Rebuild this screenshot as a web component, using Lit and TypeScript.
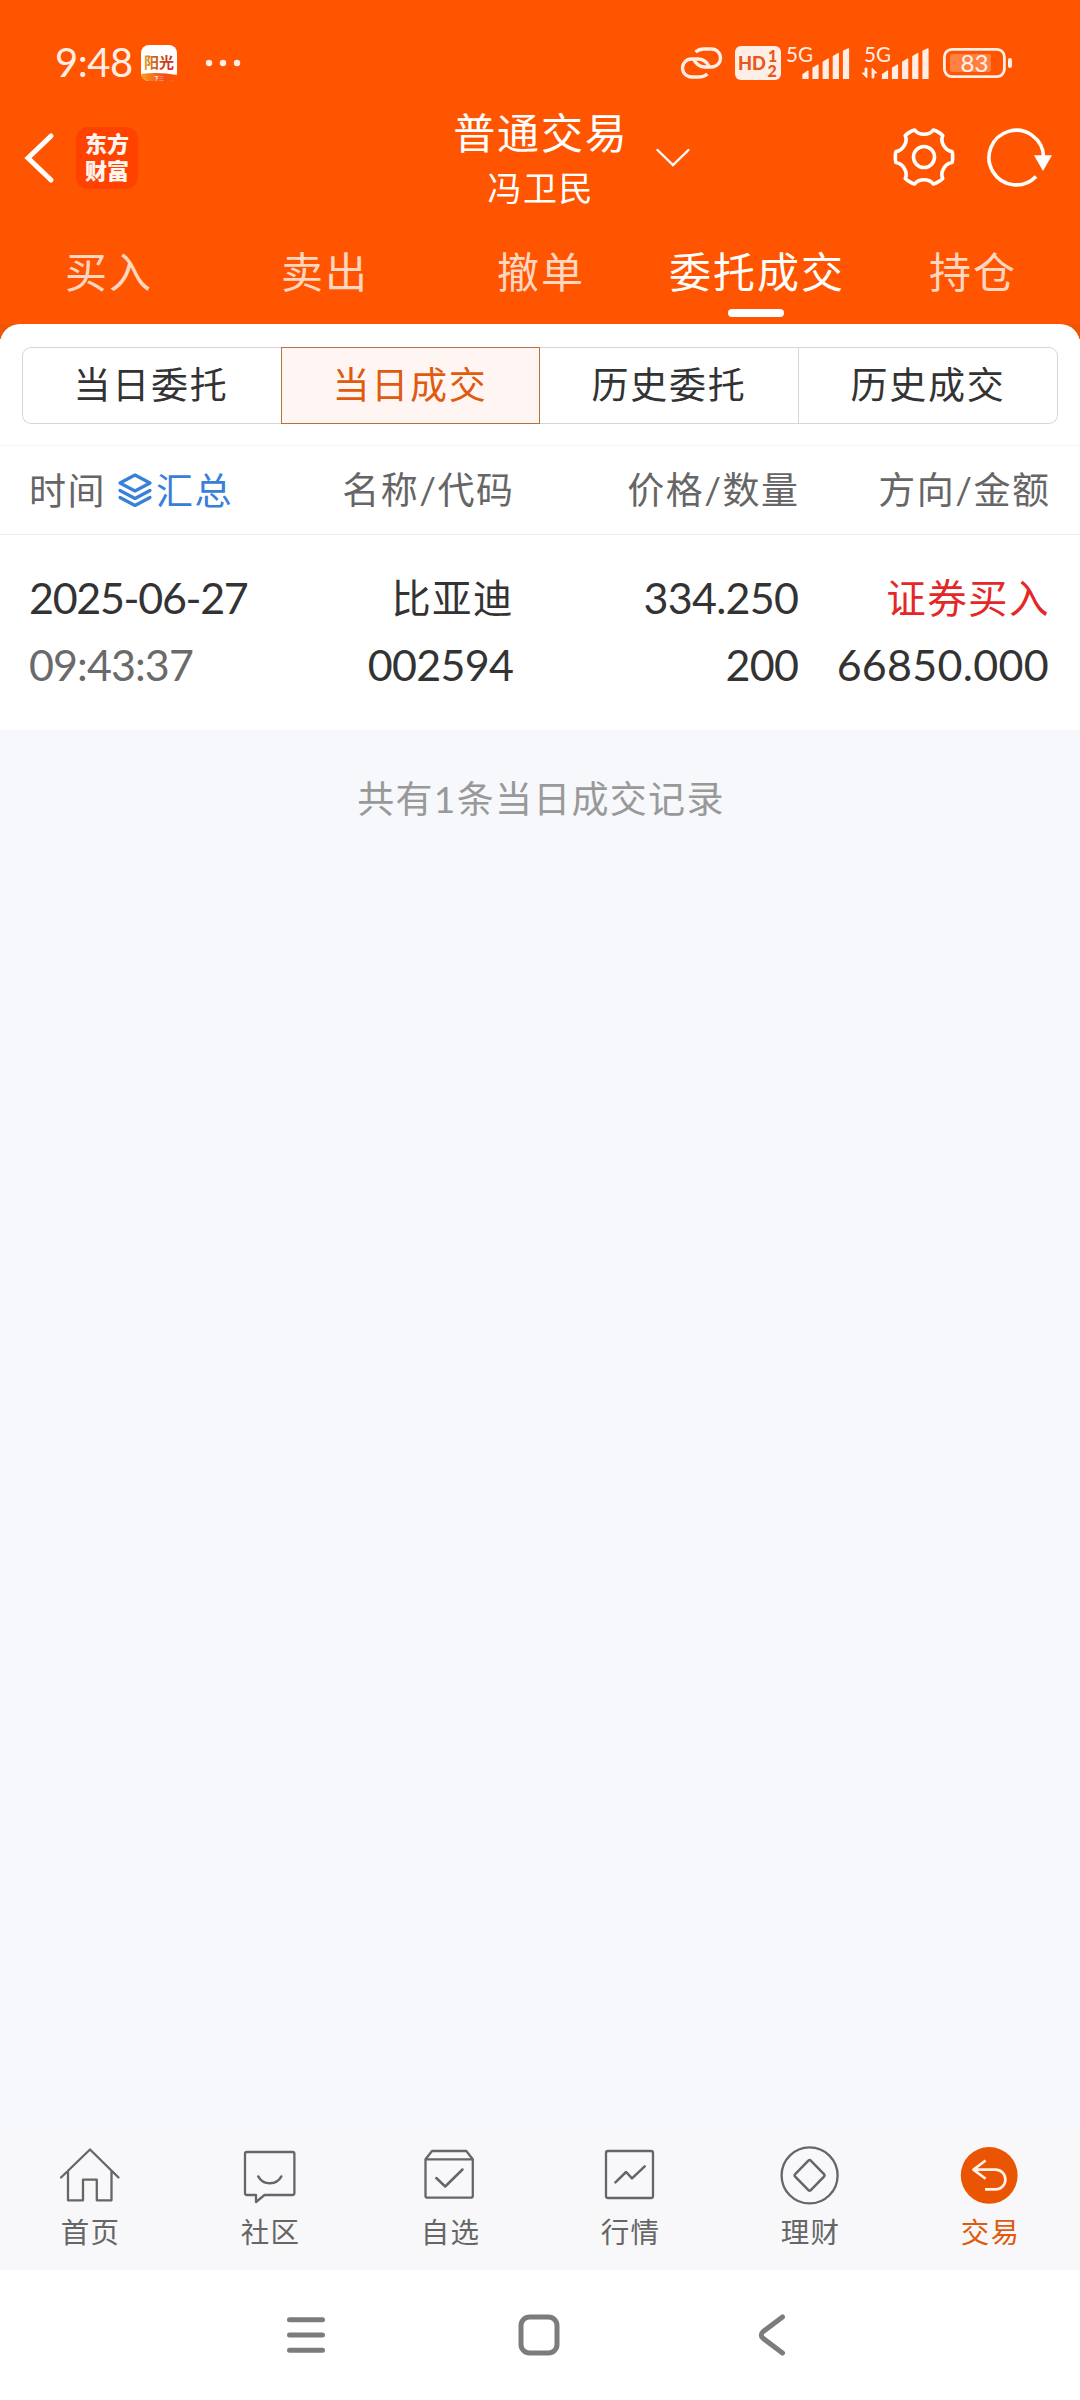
import { LitElement, html, svg, css } from "lit";
import { customElement } from "lit/decorators.js";
import { classMap } from "lit/directives/class-map.js";

/** Six-toothed gear outline around the origin. */
function gearPath(): string {
  const at = (r: number, deg: number) => {
    const a = (deg * Math.PI) / 180;
    return `${(r * Math.cos(a)).toFixed(2)} ${(r * Math.sin(a)).toFixed(2)}`;
  };
  let d = `M${at(28.6, -11)}`;
  for (let k = 0; k < 6; k++) {
    const a = k * 60;
    d += `Q${at(29, a - 5)} ${at(28.6, a)}Q${at(29, a + 5)} ${at(28.6, a + 11)}`;
    d += `C${at(22, a + 16)} ${at(22, a + 44)} ${at(28.6, a + 49)}`;
  }
  return d + "Z";
}

const bars = svg`
  <path d="M1 30.500V26.500L6 23V30.500ZM11 30.500V20L16 17V30.500ZM21.200 30.500V14L26.200 11V30.500ZM31.300 30.500V8.500L36.300 5.500V30.500ZM41.500 30.500V3L46.500 0.800V30.500Z"
    fill="#ffeee6" stroke="#ffeee6" stroke-width="1.200" stroke-linejoin="round"/>`;

const tabIcons = {
  home: svg`<path d="M3 32.500 32 4.500 60.500 32.500M10 26V55.300H25V34.700H38.800V55.300H53.500V26"/>`,
  chat: svg`<path d="M9 7H54.400Q56.400 7 56.400 9V48Q56.400 50 54.400 50H26.500L18 57V50H9Q7 50 7 48V9Q7 7 9 7Z"/><path d="M20.300 31.500Q24 38.300 31.800 38.300T43.300 31.500" stroke-width="2.600"/>`,
  box: svg`<path d="M7.500 14.300 14 6H48.300L54.800 14.300V50.700Q54.800 52.700 52.800 52.700H9.500Q7.500 52.700 7.500 50.700ZM7.500 14.300H54.800"/><path d="M18.300 33 27.200 41.500 44.500 24.500" stroke-width="2.500"/>`,
  chart: svg`<rect x="8" y="6" width="47" height="47" rx="2"/><path d="M17.400 37.300 28.100 27 34 33.300 46.700 21.300" stroke-width="2.500"/>`,
  coin: svg`<circle cx="31.600" cy="30.400" r="28"/><path d="M30.400 15.600Q31.600 14.400 32.800 15.600L46 29.200Q47.200 30.400 46 31.600L32.800 45.200Q31.600 46.400 30.400 45.200L17.200 31.600Q16 30.400 17.200 29.200Z" stroke-width="2.500"/>`,
  trade: svg`<circle cx="31.200" cy="30.400" r="28.400" fill="#ea5504" stroke="none"/><path d="M27.600 15.500 15.400 24.600 27.600 33.700M15.400 24.600H37.500A9.900 9.900 0 0 1 37.500 44.400H27" stroke="#fff1e8" stroke-width="2.600" stroke-linecap="butt"/>`,
};

const topTabs = ["买入", "卖出", "撤单", "委托成交", "持仓"];
const segments = ["当日委托", "当日成交", "历史委托", "历史成交"];
const navTabs: { label: string; icon: keyof typeof tabIcons }[] = [
  { label: "首页", icon: "home" },
  { label: "社区", icon: "chat" },
  { label: "自选", icon: "box" },
  { label: "行情", icon: "chart" },
  { label: "理财", icon: "coin" },
  { label: "交易", icon: "trade" },
];
const records = [
  {
    date: "2025-06-27",
    time: "09:43:37",
    name: "比亚迪",
    code: "002594",
    price: "334.250",
    count: "200",
    side: "证券买入",
    amount: "66850.000",
  },
];

@customElement("status-bar")
class StatusBar extends LitElement {
  static styles = css`
    :host {
      display: flex;
      align-items: center;
      height: 82px;
      padding: 22px 68px 0 55px;
      color: #ffeee6;
    }
    svg { display: block; flex: none; overflow: visible; }
    .clock { font-size: 40px; line-height: 80px; letter-spacing: -0.5px; width: 86px; margin-top: -2px; white-space: nowrap; }
    .dots { margin-left: 28px; }
    .right { display: flex; align-items: center; margin-left: auto; }
    .hd { margin-left: 12px; }
    .sig1 { margin-left: 6px; }
    .sig2 { margin-left: 12px; }
    .battery { margin-left: 14px; }
    text { font-family: Lato, "Noto Sans CJK SC", sans-serif; }
    .cjk { font-family: "Noto Sans CJK SC", sans-serif; }
  `;
  render() {
    return html`
      <span class="clock">9:48</span>
      <svg width="36" height="36" viewBox="0 0 36 36">
        <defs>
          <linearGradient id="g" x1="0" x2="1"><stop offset="0" stop-color="#e09a20" /><stop offset="0.5" stop-color="#c8501c" /><stop offset="1" stop-color="#c82a18" /></linearGradient>
          <linearGradient id="h" x1="0" x2="1"><stop offset="0" stop-color="#f7a020" /><stop offset="0.6" stop-color="#f2501c" /><stop offset="1" stop-color="#ff5200" /></linearGradient>
        </defs>
        <rect width="36" height="36" rx="8" fill="#fff" />
        <path d="M0 29Q18 26.500 36 30Q35 36 28 36H8Q1 36 0 29Z" fill="url(#h)" />
        <text class="cjk" x="3" y="22.500" font-size="15" font-weight="700" fill="url(#g)">阳光</text>
        <text class="cjk" x="13" y="34.500" font-size="5" fill="#fff">下三</text>
      </svg>
      <svg class="dots" width="36" height="8" viewBox="0 0 36 8" fill="#ffeee6">
        <circle cx="4" cy="4" r="3.200" /><circle cx="18" cy="4" r="3.200" /><circle cx="32" cy="4" r="3.200" />
      </svg>
      <div class="right">
        <svg width="43" height="32" viewBox="0 0 43 32" fill="none" stroke="#ffeee6" stroke-width="3.300">
          <path d="M15.500 5Q19 2 24 2H31.500A9 9 0 0 1 31.500 20H24.500Q17 19.500 13.500 12" />
          <path d="M27.500 27Q24 30 19 30H11.500A9 9 0 0 1 11.500 12H18.500Q26 12.500 29.500 20" />
        </svg>
        <svg class="hd" width="46" height="34" viewBox="0 0 46 34">
          <rect width="46" height="34" rx="6" fill="#ffeee6" />
          <g fill="#e8561a" font-weight="900">
            <text x="3" y="24" font-size="19.500" textLength="28" lengthAdjust="spacingAndGlyphs">HD</text>
            <text x="33" y="15.500" font-size="16">1</text>
            <text x="32.500" y="30.500" font-size="16">2</text>
          </g>
        </svg>
        <svg class="sig1" width="63" height="34" viewBox="0 0 63 34">
          <text x="-1" y="15.500" font-size="21" textLength="27" lengthAdjust="spacingAndGlyphs" fill="#ffeee6">5G</text>
          <g transform="translate(15 2)">${bars}</g>
        </svg>
        <svg class="sig2" width="67" height="34" viewBox="0 0 67 34">
          <text x="2" y="15.500" font-size="21" textLength="27" lengthAdjust="spacingAndGlyphs" fill="#ffeee6">5G</text>
          <path d="M5 22V32L0 27H3V22ZM10 32V22L15 27H12V32Z" fill="#ffeee6" stroke="#ffeee6" stroke-width="0.800" />
          <g transform="translate(19.500 2)">${bars}</g>
        </svg>
        <svg class="battery" width="69" height="30" viewBox="0 0 69 30">
          <rect x="1.400" y="1.400" width="60" height="27.200" rx="7.500" fill="none" stroke="#ffeee6" stroke-width="2.800" />
          <rect x="7" y="6" width="41" height="18" rx="2" fill="#ff8040" />
          <rect x="65" y="10" width="4" height="10" rx="2" fill="#ffeee6" />
          <text x="17.500" y="23.500" font-size="24" textLength="28" lengthAdjust="spacingAndGlyphs" fill="#fff3ec">83</text>
        </svg>
      </div>
    `;
  }
}

@customElement("app-root")
class AppRoot extends LitElement {
  static styles = css`
    :host {
      display: flex;
      flex-direction: column;
      width: 1080px;
      height: 2400px;
      overflow: hidden;
      background: #f7f8fb;
      color: #333;
      font-family: Lato, "Noto Sans CJK SC", sans-serif;
    }
    svg { display: block; flex: none; overflow: visible; }
    .top { background: #ff5500; color: #fff; }
    .titlebar { display: grid; grid-template-columns: 1fr auto 1fr; height: 108px; align-items: center; }
    .lead { display: flex; align-items: center; padding-left: 24px; gap: 20px; }
    .logo {
      width: 62px; height: 62px; border-radius: 12px; background: #ff4200; box-sizing: border-box;
      display: flex; flex-direction: column; align-items: center; justify-content: center; padding-bottom: 2px;
      font: 900 22px/27px Lato, "Noto Sans CJK SC", sans-serif; color: #fff4ee;
    }
    .titles { display: flex; flex-direction: column; align-items: center; }
    .title { font-size: 42px; line-height: 59px; letter-spacing: 1.900px; margin-right: -1.900px; }
    .sub { font-size: 34px; line-height: 49px; letter-spacing: 1.600px; margin-right: -1.600px; }
    .trail { display: flex; align-items: center; padding: 0 28px 0 29px; }
    .gear { margin-left: auto; margin-right: 32px; }
    .tabs { display: grid; grid-template-columns: repeat(5, 1fr); height: 112px; }
    .tab {
      display: flex; flex-direction: column; align-items: center; padding-top: 23px;
      font-size: 42px; line-height: 74px; letter-spacing: 2px; color: #ffd6c0; white-space: nowrap;
    }
    .tab span { margin-right: -2px; }
    .tab.on { color: #fff; }
    .tab.on::after { content: ""; width: 56px; height: 8px; border-radius: 4px; background: #fff; }
    .panel-back { background: linear-gradient(#ee5500 15px, #fff 15px); }
    .panel { background: #fff; border-radius: 20px 20px 0 0; padding: 23px 22px 21px 22px; }
    .segs { display: grid; grid-template-columns: repeat(4, 1fr); height: 77px; }
    .seg {
      box-sizing: border-box; border: 1px solid #d5d8da; border-left: none; text-align: center;
      font-size: 37px; line-height: 74px; letter-spacing: 1.700px; color: #333;
    }
    .seg:first-child { border-left: 1px solid #d5d8da; border-right: none; border-radius: 9px 0 0 9px; padding-right: 2px; }
    .seg:last-child { border-radius: 0 9px 9px 0; }
    .seg.on { border: 1px solid #b5723f; background: #fff6f3; color: #e05a10; padding-right: 1px; }
    .cols { display: grid; grid-template-columns: 262px 222px 285px 251px; padding: 0 31px 0 29px; background: #fff; box-sizing: border-box; }
    .cols > * { text-align: right; white-space: nowrap; }
    .head {
      height: 90px; border-top: 1px solid #f5f6f6; border-bottom: 1px solid #ececec;
      font-size: 37px; line-height: 87px; letter-spacing: 1.500px; color: #666;
    }
    .head > * { margin-right: -1.500px; }
    .head .first { display: flex; align-items: center; }
    .sum { display: flex; align-items: center; gap: 4px; margin-left: 12px; color: #3880d8; }
    .row { padding-top: 29px; font-size: 43px; line-height: 67px; height: 195px; }
    .cell { display: flex; flex-direction: column; align-items: flex-end; }
    .cell.first { align-items: flex-start; }
    .num { letter-spacing: -0.700px; margin-right: -0.300px; }
    .first .num { letter-spacing: -1.300px; }
    .first .time { letter-spacing: -0.900px; color: #6a6a6a; }
    .amount { letter-spacing: 0.300px; margin-right: 0; }
    .cjk { font-size: 39.500px; letter-spacing: 1.400px; margin-right: -0.900px; }
    .side { color: #e42828; }
    .count { text-align: center; padding: 43px 0 0 2px; font-size: 37px; line-height: 52px; letter-spacing: 1.300px; color: #999; }
    .grow { flex: 1; }
    .nav { display: grid; grid-template-columns: repeat(6, 1fr); height: 142px; background: #f8f8fa; }
    .item { display: flex; flex-direction: column; align-items: center; padding-top: 17px; gap: 5px; color: #666; }
    .item svg { fill: none; stroke: #666; stroke-width: 2.300; stroke-linecap: round; stroke-linejoin: round; }
    .item span { font-size: 28.500px; line-height: 36px; letter-spacing: 1.300px; margin-right: -1px; }
    .item.on { color: #e05a10; }
    .system { display: flex; justify-content: center; gap: 189px; height: 112px; padding: 18px 2px 0 0; background: #fff; }
    .system svg { fill: none; stroke: #7c7c7c; stroke-width: 5; stroke-linecap: round; stroke-linejoin: round; }
  `;

  render() {
    return html`
      <div class="top">
        <status-bar></status-bar>
        <div class="titlebar">
          <div class="lead">
            <svg width="32" height="54" viewBox="0 0 32 54" fill="none" stroke="#fff" stroke-width="5" stroke-linecap="round"><path d="M27 5 4 27 27 49" /></svg>
            <div class="logo"><span>东方</span><span>财富</span></div>
          </div>
          <div class="titles"><div class="title">普通交易</div><div class="sub">冯卫民</div></div>
          <div class="trail">
            <svg width="34" height="20" viewBox="0 0 34 20" fill="none" stroke="#fff" stroke-width="2.400" stroke-linecap="round"><path d="M1.500 2 17 17 32.500 2" /></svg>
            <svg class="gear" width="62" height="62" viewBox="-31 -30 62 62" fill="none" stroke="#fff" stroke-width="3.600" stroke-linejoin="round"><path d=${gearPath()} /><circle r="10.500" /></svg>
            <svg width="65" height="60" viewBox="0 0 65 60" fill="none" stroke="#fff" stroke-width="3.600">
              <path d="M56.600 29A27.300 27.300 0 1 0 49 48.500" /><path d="M47 27.300H65L56 43Z" fill="#fff" stroke="none" />
            </svg>
          </div>
        </div>
        <div class="tabs">
          ${topTabs.map((t, i) => html`<div class=${classMap({ tab: true, on: i === 3 })}><span>${t}</span></div>`)}
        </div>
      </div>
      <div class="panel-back">
        <div class="panel">
          <div class="segs">
            ${segments.map((t, i) => html`<div class=${classMap({ seg: true, on: i === 1 })}>${t}</div>`)}
          </div>
        </div>
      </div>
      <div class="cols head">
        <div class="first">
          <span>时间</span>
          <span class="sum">
            <svg width="34" height="36" viewBox="0 0 34 36" fill="none" stroke="#3880d8" stroke-width="3.200" stroke-linejoin="round" stroke-linecap="round">
              <path d="M17 3 32 11 17 19 2 11ZM2 18.500 17 26.500 32 18.500M2 25.500 17 33.500 32 25.500" />
            </svg>
            <span>汇总</span>
          </span>
        </div>
        <div>名称/代码</div>
        <div>价格/数量</div>
        <div>方向/金额</div>
      </div>
      ${records.map(
        (r) => html`<div class="cols row">
          <div class="cell first"><span class="num">${r.date}</span><span class="num time">${r.time}</span></div>
          <div class="cell"><span class="cjk">${r.name}</span><span class="num">${r.code}</span></div>
          <div class="cell"><span class="num">${r.price}</span><span class="num">${r.count}</span></div>
          <div class="cell"><span class="cjk side">${r.side}</span><span class="num amount">${r.amount}</span></div>
        </div>`
      )}
      <div class="count">共有${records.length}条当日成交记录</div>
      <div class="grow"></div>
      <div class="nav">
        ${navTabs.map(
          (t, i) => html`<div class=${classMap({ item: true, on: i === 5 })}>
            <svg width="64" height="64" viewBox="0 0 64 64">${tabIcons[t.icon]}</svg><span>${t.label}</span>
          </div>`
        )}
      </div>
      <div class="system">
        <svg width="44" height="94" viewBox="0 0 44 94"><path d="M5.500 31.700H38.500M5.500 47H38.500M5.500 62.300H38.500" /></svg>
        <svg width="44" height="94" viewBox="0 0 44 94"><rect x="4" y="29" width="36" height="36" rx="8.500" /></svg>
        <svg width="44" height="94" viewBox="0 0 44 94"><path d="M32.500 29 13 43.700Q9.500 47 13 50.300L32.500 65" /></svg>
      </div>
    `;
  }
}
